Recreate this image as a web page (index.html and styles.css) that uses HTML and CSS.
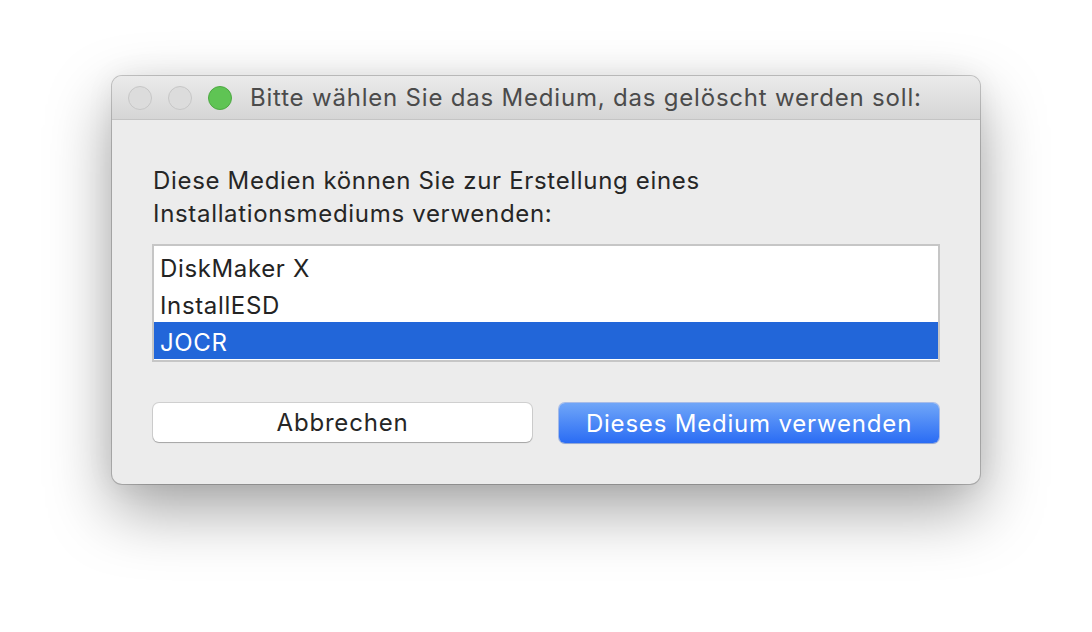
FILE: index.html
```html
<!DOCTYPE html>
<html lang="de">
<head>
<meta charset="utf-8">
<link rel="stylesheet" href="styles.css">
</head>
<body>
<div class="stage">
  <div class="window">
    <div class="titlebar">
      <div class="lights">
        <span class="light off"></span>
        <span class="light off"></span>
        <span class="light green"></span>
      </div>
      <div class="title">Bitte wählen Sie das Medium, das gelöscht werden soll:</div>
    </div>
    <div class="content">
      <p class="message">Diese Medien können Sie zur Erstellung eines<br>Installationsmediums verwenden:</p>
      <div class="list">
        <div class="row">DiskMaker X</div>
        <div class="row">InstallESD</div>
        <div class="row selected">JOCR</div>
      </div>
      <div class="buttons">
        <button class="btn">Abbrechen</button>
        <button class="btn primary">Dieses Medium verwenden</button>
      </div>
    </div>
  </div>
</div>
</body>
</html>
```
FILE: styles.css
```css
html, body {
  margin: 0;
  padding: 0;
  background: #ffffff;
}
body {
  width: 1092px;
  height: 632px;
  overflow: hidden;
  font-family: "Inter", "Liberation Sans", sans-serif;
}
.stage {
  padding: 76px 0 0 112px;
}
.window {
  width: 868px;
  height: 408px;
  box-sizing: border-box;
  border-radius: 10px;
  background: #ececec;
  box-shadow: 0 0 0 1px rgba(0,0,0,0.2), 0 26px 64px rgba(0,0,0,0.36), 0 0 30px rgba(0,0,0,0.06);
  overflow: hidden;
  display: flex;
  flex-direction: column;
}
.titlebar {
  height: 43px;
  flex: none;
  display: flex;
  align-items: center;
  background: linear-gradient(#ebebeb, #d5d5d5);
  border-bottom: 1px solid #c4c4c4;
  padding-left: 16px;
}
.lights {
  display: flex;
  gap: 16px;
}
.light {
  width: 24px;
  height: 24px;
  box-sizing: border-box;
  border-radius: 50%;
}
.light.off {
  background: #dcdcdc;
  border: 1px solid #c6c6c6;
}
.light.green {
  background: #5fc454;
  border: 1px solid #4ea843;
}
.title {
  margin-left: 18px;
  font-size: 24px;
  color: #4b4b4b;
  letter-spacing: 0.8px;
}
.content {
  padding: 44px 40px 0 41px;
  display: flex;
  flex-direction: column;
}
.message {
  margin: 0;
  font-size: 24px;
  line-height: 33px;
  color: #262626;
  letter-spacing: 0.68px;
}
.list {
  margin-top: 14px;
  margin-left: -1px;
  width: 788px;
  box-sizing: border-box;
  border: 2px solid #c6c6c6;
  background: #ffffff;
  padding: 2px 0 1px;
}
.row {
  height: 37px;
  box-sizing: border-box;
  padding-top: 2px;
  line-height: 37px;
  padding-left: 6px;
  font-size: 24px;
  color: #232323;
  letter-spacing: 0.64px;
}
.row.selected {
  background: #2266d9;
  color: #ffffff;
}
.buttons {
  margin-top: 41px;
  display: flex;
  gap: 27px;
}
.btn {
  height: 39px;
  width: 379px;
  border: none;
  border-radius: 6px;
  font-family: inherit;
  font-size: 24px;
  letter-spacing: 0.8px;
  padding: 0;
  background: #ffffff;
  color: #262626;
  box-shadow: 0 0 0 1px rgba(0,0,0,0.12), 0 1px 1px rgba(0,0,0,0.2);
}
.btn.primary {
  width: 380px;
  height: 40px;
  color: #ffffff;
  background: linear-gradient(#70a6f8, #2a6cf4);
  box-shadow: 0 0 0 1px rgba(40,100,230,0.35), 0 1px 1px rgba(0,0,0,0.15);
}
```
